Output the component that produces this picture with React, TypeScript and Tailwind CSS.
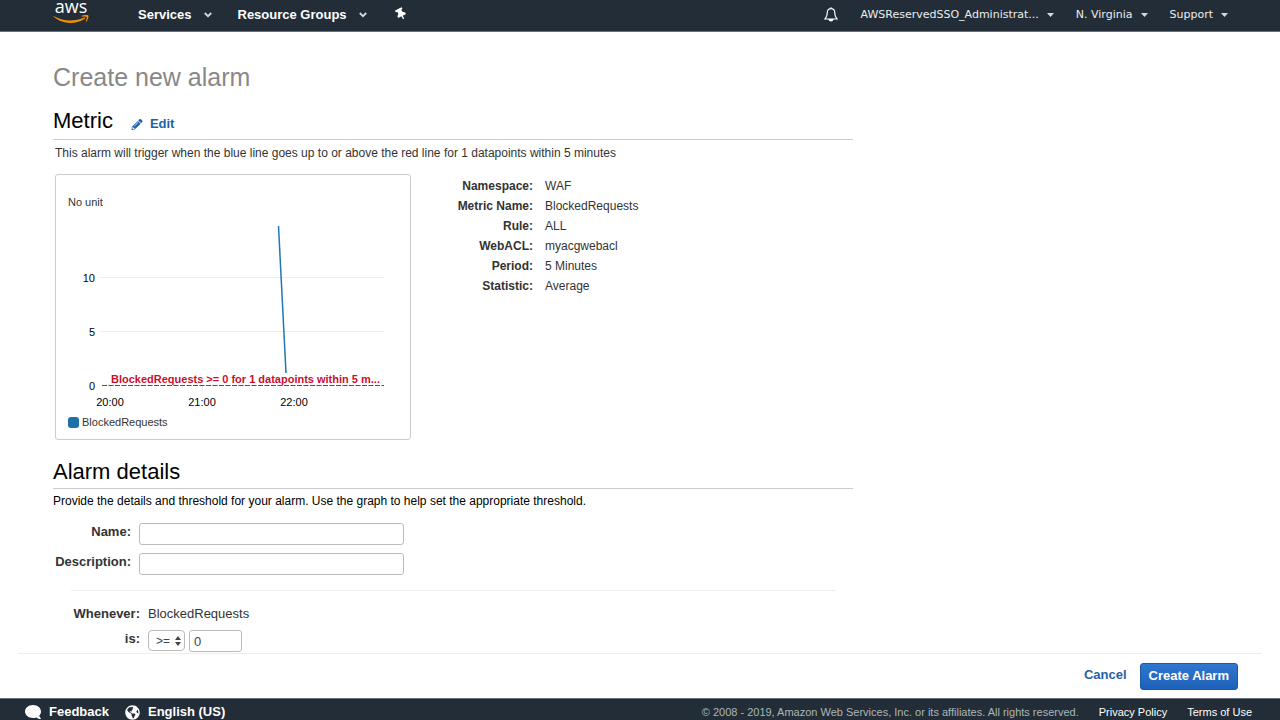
import React from 'react';
import { FaComment, FaGlobeAmericas, FaPencilAlt, FaThumbtack } from 'react-icons/fa';

const details: [string, string][] = [
  ['Namespace', 'WAF'],
  ['Metric Name', 'BlockedRequests'],
  ['Rule', 'ALL'],
  ['WebACL', 'myacgwebacl'],
  ['Period', '5 Minutes'],
  ['Statistic', 'Average'],
];

function AwsLogo() {
  return (
    <a href="#home" aria-label="AWS home" className="flex w-9">
      <svg viewBox="0 0 36 26" className="h-[26px] w-9" fill="#f29100">
        <text x="18" y="13" textAnchor="middle" fill="#fff" className="font-['Open_Sans',sans-serif] text-[18px] font-medium">aws</text>
        <g transform="translate(0 15)">
          <path d="M.5 1.600C.2 1.300.5.9.9 1.200 10.300 6.300 21 7 31.400 2.500c.8-.3 1.300.4.6 1C23.500 9.500 9.500 10 .5 1.600z" />
          <path d="M28.400.9c2.200-1.100 6.300-1.200 6.900-.5.6.8-.3 4.400-2.100 6.300-.3.3-.6.1-.5-.2.5-1.200 1.400-3.800 1-4.400-.4-.5-3.100-.4-4.900-.6-.5-.1-.7-.4-.4-.6z" />
        </g>
      </svg>
    </a>
  );
}

function Chevron() {
  return (
    <svg viewBox="0 0 8 6" className="h-[6px] w-2" fill="none" stroke="#d5dbdb" strokeWidth="1.800">
      <path d="M.8 1 4 4.200 7.200 1" />
    </svg>
  );
}

function Caret() {
  return (
    <svg viewBox="0 0 7 4" className="h-1 w-[7px]" fill="#d5dbdb">
      <path d="M0 0h7L3.500 4z" />
    </svg>
  );
}

function Header() {
  return (
    <header className="flex h-8 shrink-0 items-start justify-between border-b border-[#66717c] bg-[#222d38] pr-[52px] pl-[53px] text-white">
      <nav className="flex items-start text-[13px] leading-[29px] font-bold">
        <AwsLogo />
        <button className="ml-[49px] flex items-center gap-3">Services <Chevron /></button>
        <button className="ml-[26px] flex items-center gap-3">Resource Groups <Chevron /></button>
        <button aria-label="Pin shortcut" className="ml-7 flex h-7 items-center">
          <FaThumbtack className="h-3 w-3 -rotate-[28deg]" />
        </button>
      </nav>
      <div className="flex items-start font-['DejaVu_Sans',sans-serif] text-[11px] leading-[29px] text-[#eaeded]">
        <button aria-label="Notifications" className="flex h-7 items-center">
          <svg viewBox="0 0 14 15" className="h-[15px] w-[14px]" fill="none" stroke="#fff" strokeWidth="1.200">
            <path d="M7 1.600c-2.400 0-3.700 1.600-3.700 4C3.300 9 2.400 10.400 1 12h12c-1.400-1.600-2.300-3-2.300-6.400 0-2.400-1.300-4-3.700-4zM7 .3v1.300" />
            <path d="M5.200 12.600c.2 1.700 3.400 1.700 3.600 0z" fill="#fff" />
          </svg>
        </button>
        <button className="ml-[22px] flex items-center gap-2">AWSReservedSSO_Administrat... <Caret /></button>
        <button className="ml-[22px] flex items-center gap-2">N. Virginia <Caret /></button>
        <button className="ml-[22px] flex items-center gap-2">Support <Caret /></button>
      </div>
    </header>
  );
}

function Chart() {
  return (
    <figure className="h-[266px] w-[356px] shrink-0 rounded-[3px] border border-[#ccc]">
      <svg viewBox="0 0 354 264" className="h-full w-full font-['Liberation_Sans',Arial,sans-serif] text-[11px]" role="img" aria-label="BlockedRequests over time">
        <text x="12" y="31" fill="#333">No unit</text>
        <g stroke="#eee" strokeWidth="1">
          <path d="M43 102.500H328M43 156.500H328M54.500 211v5M146.500 211v5M238.500 211v5" />
        </g>
        <g textAnchor="end" fill="#000">
          <text x="39" y="107">10</text>
          <text x="39" y="161">5</text>
          <text x="39" y="215">0</text>
        </g>
        <g textAnchor="middle" fill="#000">
          <text x="54" y="231">20:00</text>
          <text x="146" y="231">21:00</text>
          <text x="238" y="231">22:00</text>
        </g>
        <path d="M222.500 51 230 198" stroke="#1f77b4" strokeWidth="1.500" fill="none" />
        <path d="M46 210.500H328" stroke="#b8203a" strokeWidth="1.200" strokeDasharray="5 1.500" />
        <text x="55" y="208" fill="#c7102e" className="font-bold">BlockedRequests &gt;= 0 for 1 datapoints within 5 m...</text>
        <rect x="12" y="242" width="11" height="11" rx="3" fill="#1f6fa8" />
        <text x="26" y="251" fill="#333">BlockedRequests</text>
      </svg>
    </figure>
  );
}

const field = 'h-[22px] rounded-[3px] border border-[#bbb] bg-white px-1 text-[13px] text-[#444] outline-none';

export default function App() {
  return (
    <div className="flex h-screen flex-col overflow-hidden bg-white font-['Liberation_Sans',Arial,sans-serif] text-[#333]">
      <Header />
      <main className="min-h-0 flex-1 overflow-hidden px-[53px]">
        <div className="max-w-[800px]">
          <h1 className="pt-7 text-[25px] leading-[34px] text-[#888]">Create new alarm</h1>
          <div className="mt-[13px] flex h-[33px] items-start border-b border-[#ccc]">
            <h2 className="text-[22px] leading-7 text-black">Metric</h2>
            <a href="#edit" className="mt-[7px] ml-[18px] flex items-center gap-[7px] text-[13px] leading-5 font-bold text-[#1f62a8]">
              <FaPencilAlt className="h-[11px] w-3" />
              Edit
            </a>
          </div>
          <p className="mt-1 pl-[2px] text-[12px] leading-[18px]">
            This alarm will trigger when the blue line goes up to or above the red line for 1 datapoints within 5 minutes
          </p>
          <div className="mt-3 flex gap-8 pl-[2px]">
            <Chart />
            <dl className="pt-[2px] text-[12px]">
              {details.map(([name, value]) => (
                <div key={name} className="flex h-5 items-center gap-3">
                  <dt className="w-[90px] text-right font-bold">{name}:</dt>
                  <dd>{value}</dd>
                </div>
              ))}
            </dl>
          </div>
          <h2 className="mt-[18px] border-b border-[#ccc] pb-[2px] text-[22px] leading-7 text-black">Alarm details</h2>
          <p className="mt-1 text-[12px] leading-4 text-black">
            Provide the details and threshold for your alarm. Use the graph to help set the appropriate threshold.
          </p>
          <form className="mt-[14px] text-[13px]">
            <div className="flex gap-2">
              <label htmlFor="name" className="w-[78px] text-right leading-[18px] font-bold">Name:</label>
              <input id="name" className={field + ' w-[265px]'} />
            </div>
            <div className="mt-2 flex gap-2">
              <label htmlFor="description" className="w-[78px] text-right leading-[18px] font-bold">Description:</label>
              <input id="description" className={field + ' w-[265px]'} />
            </div>
            <hr className="mt-[15px] mr-[17px] ml-[18px] border-[#eee]" />
            <div className="mt-[14px] flex gap-2 leading-[18px]">
              <span className="w-[87px] text-right font-bold">Whenever:</span>
              <span>BlockedRequests</span>
            </div>
            <div className="mt-[7px] flex gap-2">
              <label htmlFor="comparison" className="w-[87px] text-right leading-[18px] font-bold">is:</label>
              <div className="flex gap-1">
                <div className="relative">
                  <select id="comparison" className="h-[21px] w-[37px] appearance-none rounded-[4px] border border-[#bbb] bg-white pl-[7px] text-[12px] text-[#444]">
                    <option>&gt;=</option>
                  </select>
                  <svg viewBox="0 0 6 10" className="pointer-events-none absolute top-[6px] right-1 h-[10px] w-[6px]" fill="#444">
                    <path d="M0 4h6L3 0zM0 6h6l-3 4z" />
                  </svg>
                </div>
                <input aria-label="Threshold" defaultValue="0" className={field + ' w-[53px]'} />
              </div>
            </div>
          </form>
        </div>
      </main>
      <div className="mr-[18px] ml-[18px] flex h-[45px] shrink-0 items-center justify-end gap-[13px] border-t border-[#eee] pr-6 text-[13px] font-bold">
        <a href="#cancel" className="pb-[2px] text-[#1f62a8]">Cancel</a>
        <button className="h-[27px] rounded-[3px] border border-[#1c5aa8] bg-linear-to-b from-[#2f77cf] to-[#1e60b8] px-2 text-white">Create Alarm</button>
      </div>
      <footer className="flex h-[22px] shrink-0 items-start justify-between border-t border-[#66717c] bg-[#222d38] pr-7 pl-[25px] leading-[26px] text-white">
        <div className="flex text-[13px] font-bold">
          <a href="#feedback" className="flex items-center gap-2">
            <FaComment className="h-4 w-4 -scale-x-100" />
            Feedback
          </a>
          <a href="#language" className="ml-4 flex items-center gap-2">
            <FaGlobeAmericas className="h-[15px] w-[15px]" />
            English (US)
          </a>
        </div>
        <div className="flex text-[11px]">
          <span className="text-[#aab7b8]">© 2008 - 2019, Amazon Web Services, Inc. or its affiliates. All rights reserved.</span>
          <a href="#privacy" className="ml-5">Privacy Policy</a>
          <a href="#terms" className="ml-5">Terms of Use</a>
        </div>
      </footer>
    </div>
  );
}
